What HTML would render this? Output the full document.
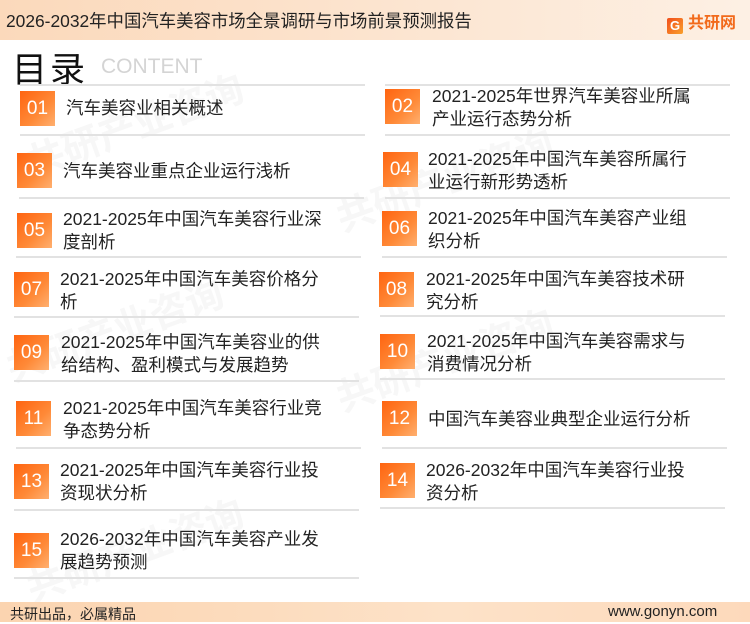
<!DOCTYPE html>
<html><head><meta charset="utf-8"><style>
*{margin:0;padding:0;box-sizing:border-box}
body{width:750px;height:622px;position:relative;overflow:hidden;background:#fff;font-family:"Liberation Sans","Noto Sans CJK SC",sans-serif;color:#222}
.hdr{position:absolute;left:0;top:0;width:750px;height:40px;background:linear-gradient(90deg,#fbd9bb 0%,#fce4cf 50%,#fdf0e4 100%)}
.hdr .t{position:absolute;left:6px;top:8px;font-size:17.4px;color:#222;white-space:nowrap}
.logo{position:absolute;left:667px;top:9px;font-size:16px;font-weight:bold;color:#f26a1b;white-space:nowrap}
.logo i{display:inline-block;width:16px;height:16px;background:linear-gradient(135deg,#f14d1b,#f9a02b);border-radius:2px;vertical-align:-2px;margin-right:5px;font-style:normal;color:#fff;font-size:13px;text-align:center;line-height:16px}
.ml{position:absolute;left:12px;top:42px;font-size:35px;color:#111;letter-spacing:3px}
.ct{position:absolute;left:101px;top:55px;font-size:21px;color:#d4d4d4}
.ln{position:absolute;height:2px;background:#e2e2e2}
.bx{position:absolute;width:35px;height:35px;background:linear-gradient(135deg,#ff6410 0%,#ff8a38 60%,#ffb070 100%);color:#fff;font-size:19px;text-align:center;line-height:35px}
.tx{position:absolute;font-size:17.5px;line-height:23px;color:#222;white-space:nowrap}
.ftr{position:absolute;left:0;top:602px;width:750px;height:20px;background:linear-gradient(90deg,#fbd4b0,#fde2c8 60%,#fdd9bb)}
.ftr span{position:absolute;top:2px;font-size:14px;color:#222}
.wm{position:absolute;color:#f7f7f7;font-size:38px;font-weight:bold;transform:rotate(-20deg);white-space:nowrap}
</style></head><body>
<div class="wm" style="left:20px;top:95px">共研产业咨询</div>
<div class="wm" style="left:330px;top:150px">共研产业咨询</div>
<div class="wm" style="left:0px;top:300px">共研产业咨询</div>
<div class="wm" style="left:330px;top:330px">共研产业咨询</div>
<div class="wm" style="left:20px;top:520px">共研产业咨询</div>
<div class="hdr"><div class="t">2026-2032年中国汽车美容市场全景调研与市场前景预测报告</div><div class="logo"><i>G</i>共研网</div></div>
<div class="ml">目录</div><div class="ct">CONTENT</div>

<div class="ln" style="left:20px;top:84px;width:345px"></div>
<div class="ln" style="left:385px;top:84px;width:345px"></div>

<div class="bx" style="left:20px;top:91px">01</div><div class="tx" style="left:66px;top:97px">汽车美容业相关概述</div>
<div class="ln" style="left:20px;top:134px;width:345px"></div>
<div class="bx" style="left:385px;top:89px">02</div><div class="tx" style="left:432px;top:85px">2021-2025年世界汽车美容业所属<br>产业运行态势分析</div>
<div class="ln" style="left:385px;top:134px;width:345px"></div>

<div class="bx" style="left:17px;top:153px">03</div><div class="tx" style="left:63px;top:160px">汽车美容业重点企业运行浅析</div>
<div class="ln" style="left:19px;top:197px;width:345px"></div>
<div class="bx" style="left:383px;top:152px">04</div><div class="tx" style="left:428px;top:148px">2021-2025年中国汽车美容所属行<br>业运行新形势透析</div>
<div class="ln" style="left:385px;top:197px;width:345px"></div>

<div class="bx" style="left:17px;top:213px">05</div><div class="tx" style="left:63px;top:208px">2021-2025年中国汽车美容行业深<br>度剖析</div>
<div class="ln" style="left:16px;top:256px;width:345px"></div>
<div class="bx" style="left:382px;top:211px">06</div><div class="tx" style="left:428px;top:207px">2021-2025年中国汽车美容产业组<br>织分析</div>
<div class="ln" style="left:382px;top:256px;width:345px"></div>

<div class="bx" style="left:14px;top:272px">07</div><div class="tx" style="left:60px;top:268px">2021-2025年中国汽车美容价格分<br>析</div>
<div class="ln" style="left:14px;top:316px;width:345px"></div>
<div class="bx" style="left:379px;top:272px">08</div><div class="tx" style="left:426px;top:268px">2021-2025年中国汽车美容技术研<br>究分析</div>
<div class="ln" style="left:380px;top:315px;width:345px"></div>

<div class="bx" style="left:14px;top:335px">09</div><div class="tx" style="left:61px;top:331px">2021-2025年中国汽车美容业的供<br>给结构、盈利模式与发展趋势</div>
<div class="ln" style="left:14px;top:380px;width:345px"></div>
<div class="bx" style="left:380px;top:334px">10</div><div class="tx" style="left:427px;top:330px">2021-2025年中国汽车美容需求与<br>消费情况分析</div>
<div class="ln" style="left:380px;top:378px;width:345px"></div>

<div class="bx" style="left:16px;top:401px">11</div><div class="tx" style="left:63px;top:397px">2021-2025年中国汽车美容行业竞<br>争态势分析</div>
<div class="ln" style="left:16px;top:447px;width:345px"></div>
<div class="bx" style="left:382px;top:401px">12</div><div class="tx" style="left:428px;top:408px">中国汽车美容业典型企业运行分析</div>
<div class="ln" style="left:382px;top:447px;width:345px"></div>

<div class="bx" style="left:14px;top:464px">13</div><div class="tx" style="left:60px;top:459px">2021-2025年中国汽车美容行业投<br>资现状分析</div>
<div class="ln" style="left:14px;top:509px;width:345px"></div>
<div class="bx" style="left:380px;top:463px">14</div><div class="tx" style="left:426px;top:459px">2026-2032年中国汽车美容行业投<br>资分析</div>
<div class="ln" style="left:380px;top:507px;width:345px"></div>

<div class="bx" style="left:14px;top:533px">15</div><div class="tx" style="left:60px;top:528px">2026-2032年中国汽车美容产业发<br>展趋势预测</div>
<div class="ln" style="left:14px;top:577px;width:345px"></div>

<div class="ftr"><span style="left:10px">共研出品，必属精品</span><span style="left:608px;font-size:15px;top:1px">www.gonyn.com</span></div>
</body></html>
